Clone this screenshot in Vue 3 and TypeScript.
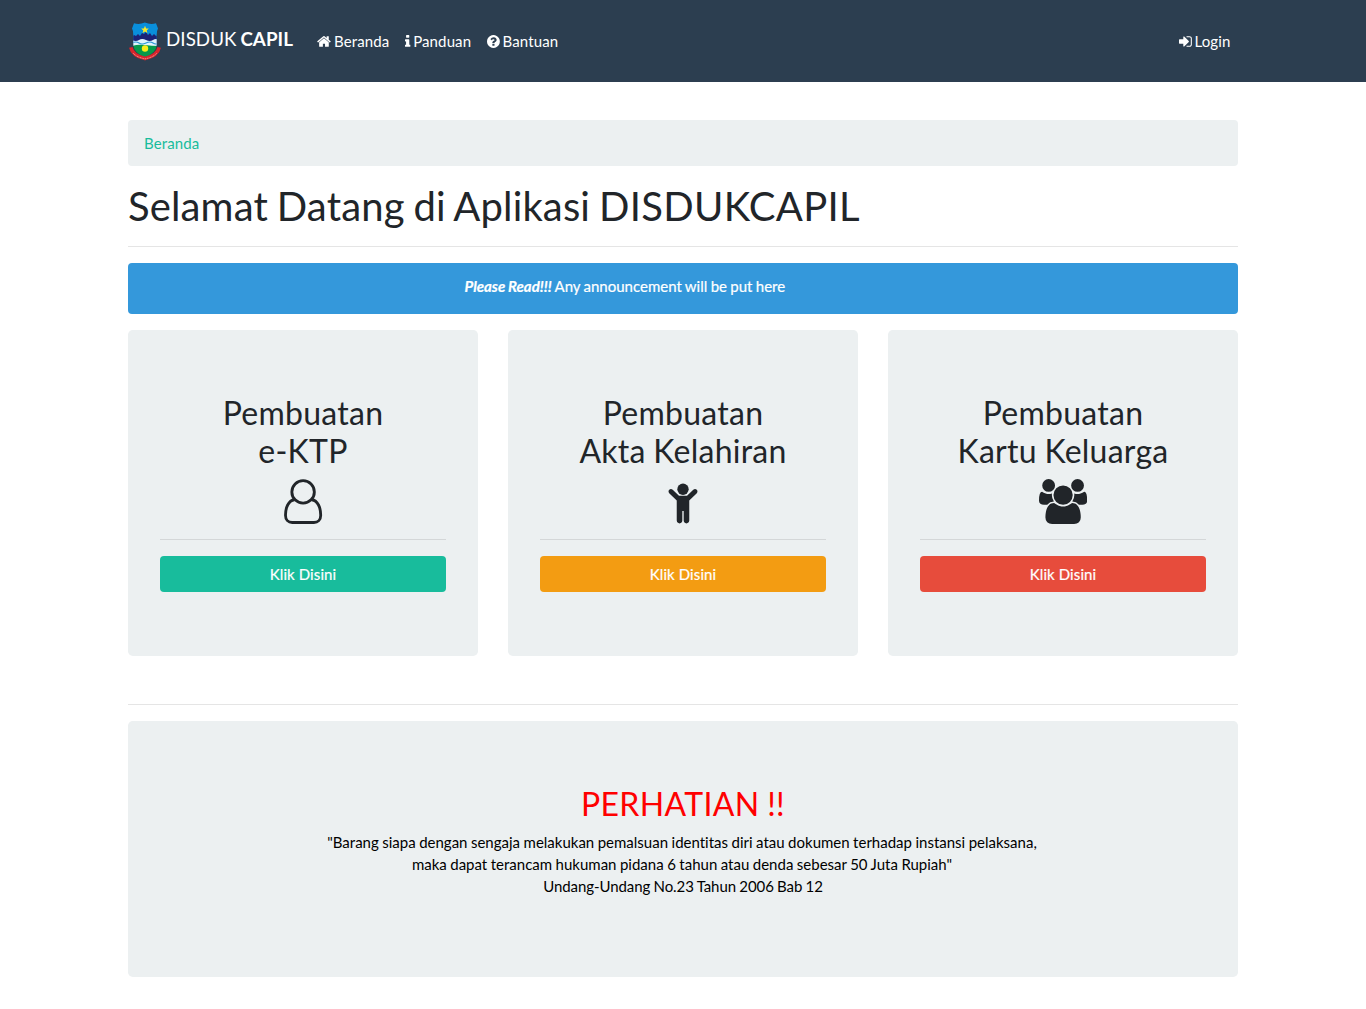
<script setup lang="ts">
interface Service {
  title: string
  subtitle: string
  icon: 'user' | 'child' | 'group'
  tone: string
}

const services: Service[] = [
  { title: 'Pembuatan', subtitle: 'e-KTP', icon: 'user', tone: 'success' },
  { title: 'Pembuatan', subtitle: 'Akta Kelahiran', icon: 'child', tone: 'warning' },
  { title: 'Pembuatan', subtitle: 'Kartu Keluarga', icon: 'group', tone: 'danger' },
]
</script>

<template>
  <header class="navbar">
    <div class="container nav-inner">
      <a class="brand">
        <svg class="logo" width="34" height="40" viewBox="0 0 34 40">
          <defs>
            <clipPath id="shield"><path d="M6 2.200Q11 4 16.800 1.600Q23 4 28 2.200L30 7.500Q28.500 10 28.700 14V24Q28 32 17 36.500Q6 32 5.300 24V14Q5.500 10 4 7.500Z" /></clipPath>
          </defs>
          <g clip-path="url(#shield)">
            <path fill="#098fdc" d="M0 0h34v20H0z" />
            <path fill="#1b2378" d="M4 16l2-2 2 1 2-2 2 2 2-3 2 1 2-2 2 3 2-2 2 3 2-2 2 2 3-1v8H4z" />
            <path fill="#dff3fb" d="M4 19q4 2 7 0t7 0 7 0 6 0v6H4z" />
            <path fill="none" stroke="#2796d4" stroke-width="1.200" d="M4 22q4-2 7 0t7 0 7 0 6 0" />
            <path fill="#07994a" d="M4 25q6-2 13-1t13 1v13H4z" />
          </g>
          <path fill="#f8e829" d="M17 4.800l1.100 2.600 2.700.2-2.100 1.800.7 2.700-2.400-1.500-2.400 1.500.7-2.700-2.100-1.800 2.700-.2z" />
          <circle cx="17" cy="27.500" r="3.200" fill="#f9ed18" />
          <path fill="none" stroke="#d9252b" stroke-width="3.600" d="M2.800 26.300q1.700 8.200 14.200 11.300Q29.500 34.500 31.200 26.300" />
          <path fill="none" stroke="#f3b7b2" stroke-width=".9" stroke-dasharray="1 .7" d="M5 32q4 4.500 12 5.800Q25 36.500 29 32" />
        </svg>
        <span class="brand-text">DISDUK <b>CAPIL</b></span>
      </a>
      <nav class="links">
        <a><svg width="13.930" height="15" viewBox="64 0 1664 1792"><path d="M1472 992v480q0 26-19 45t-45 19h-384v-384h-256v384h-384q-26 0-45-19t-19-45v-480q0-1 .5-3t.5-3l575-474 575 474q1 2 1 6zm223-69l-62 74q-8 9-21 11h-3q-13 0-21-7l-692-577-692 577q-12 8-24 7-13-2-21-11l-62-74q-8-10-7-23.5t11-21.5l719-599q32-26 76-26t76 26l244 204v-195q0-14 9-23t23-9h192q14 0 23 9t9 23v408l219 182q10 8 11 21.5t-7 23.5z" /></svg><span>Beranda</span></a>
        <a><svg width="5.360" height="15" viewBox="576 0 640 1792"><path d="M1216 1344v128q0 26-19 45t-45 19h-512q-26 0-45-19t-19-45v-128q0-26 19-45t45-19h64v-384h-64q-26 0-45-19t-19-45v-128q0-26 19-45t45-19h384q26 0 45 19t19 45v576h64q26 0 45 19t19 45zm-128-1152v192q0 26-19 45t-45 19h-256q-26 0-45-19t-19-45v-192q0-26 19-45t45-19h256q26 0 45 19t19 45z" /></svg><span>Panduan</span></a>
        <a><svg width="12.860" height="15" viewBox="128 0 1536 1792"><path d="M1024 1376v-192q0-14-9-23t-23-9h-192q-14 0-23 9t-9 23v192q0 14 9 23t23 9h192q14 0 23-9t9-23zm256-672q0-88-55.5-163t-138.5-116-170-41q-243 0-371 213-15 24 8 42l132 100q7 6 19 6 16 0 25-12 53-68 86-92 34-24 86-24 48 0 85.5 26t37.5 59q0 38-20 61t-68 45q-63 28-115.5 86.5t-52.5 125.5v36q0 14 9 23t23 9h192q14 0 23-9t9-23q0-19 21.5-49.5t54.5-49.5q32-18 49-28.5t46-35 44.5-48 28-60.5 12.5-81zm384 192q0 209-103 385.5t-279.5 279.5-385.5 103-385.5-103-279.5-279.5-103-385.5 103-385.5 279.5-279.5 385.5-103 385.5 103 279.5 279.5 103 385.5z" /></svg><span>Bantuan</span></a>
      </nav>
      <nav class="links right">
        <a><svg width="12.860" height="15" viewBox="128 0 1536 1792"><path d="M1312 896q0 26-19 45l-544 544q-19 19-45 19t-45-19-19-45v-288h-448q-26 0-45-19t-19-45v-384q0-26 19-45t45-19h448v-288q0-26 19-45t45-19 45 19l544 544q19 19 19 45zm352-352v704q0 119-84.5 203.5t-203.5 84.5h-320q-13 0-22.5-9.5t-9.5-22.5q0-4-1-20t-.5-26.5 3-23.5 10-19.5 20.5-6.5h320q66 0 113-47t47-113v-704q0-66-47-113t-113-47h-312l-11.500-1-11.500-3-8-5.500-7-9-2-13.500q0-4-1-20t-.5-26.500 3-23.500 10-19.500 20.500-6.500h320q119 0 203.500 84.500t84.500 203.500z" /></svg><span>Login</span></a>
      </nav>
    </div>
  </header>

  <main class="container">
    <div class="breadcrumb"><a>Beranda</a></div>
    <h1>Selamat Datang di Aplikasi <span class="name">DISDUKCAPIL</span></h1>
    <hr>
    <div class="alert"><span><b><i>Please Read!!!</i></b> Any announcement will be put here</span></div>
    <section class="services">
      <article v-for="s in services" :key="s.subtitle" class="panel">
        <h2>{{ s.title }}<br>{{ s.subtitle }}</h2>
        <svg v-if="s.icon === 'user'" class="icon" width="66" height="46" viewBox="0 12.500 66 46">
          <g fill="none" stroke="#212529" stroke-width="2.900">
            <circle cx="33.100" cy="25.700" r="11.500" />
            <path d="M24.200 33.700C18 34.500 15.100 42 15.100 49.500C15.100 54 18 57 22 57H44.200C48.200 57 51.100 54 51.100 49.500C51.100 42 48.200 34.500 42 33.700" />
          </g>
        </svg>
        <svg v-else-if="s.icon === 'child'" class="icon" width="66" height="46" viewBox="0 12.500 66 46">
          <circle cx="33" cy="23" r="5.800" />
          <path d="M18.900 23.500Q20.700 21.900 22.500 23.500L28.900 29.600H37.100L43.500 23.500Q45.300 21.900 47.100 23.500Q48.500 25.200 47.100 27L39.400 34.600V55Q39.100 57.800 36.500 57.900Q33.900 57.800 33.700 55V45.300H32.300V55Q32.100 57.800 29.500 57.900Q26.900 57.800 26.600 55V34.600L18.900 27Q17.500 25.200 18.900 23.500Z" />
        </svg>
        <svg v-else class="icon" width="48.200" height="45" viewBox="0 0 1920 1792">
          <path d="M593 896q-162 5-265 128h-134q-82 0-138-40.5t-56-118.5q0-353 124-353 6 0 43.5 21t97.5 42.5 119 21.5q67 0 133-23-5 37-5 66 0 139 81 256zm1071 637q0 120-73 189.5t-194 69.5h-874q-121 0-194-69.5t-73-189.5q0-53 3.5-103.5t14-109 26.5-108.5 43-97.5 62-81 85.5-53.5 111.5-20q10 0 43 21.5t73 48 107 48 135 21.5 135-21.5 107-48 73-48 43-21.5q61 0 111.5 20t85.5 53.5 62 81 43 97.5 26.5 108.5 14 109 3.5 103.500zm-1024-1277q0 106-75 181t-181 75-181-75-75-181 75-181 181-75 181 75 75 181zm704 384q0 159-112.500 271.500t-271.500 112.500-271.500-112.500-112.500-271.500 112.500-271.500 271.500-112.500 271.500 112.500 112.500 271.500zm576 225q0 78-56 118.500t-138 40.500h-134q-103-123-265-128 81-117 81-256 0-29-5-66 66 23 133 23 59 0 119-21.500t97.500-42.500 43.500-21q124 0 124 353zm-128-609q0 106-75 181t-181 75-181-75-75-181 75-181 181-75 181 75 75 181z" />
        </svg>
        <hr>
        <button type="button" class="btn" :class="s.tone">Klik Disini</button>
      </article>
    </section>
    <hr>
    <section class="panel notice">
      <h2>PERHATIAN !!</h2>
      <p class="quote">"Barang siapa dengan sengaja melakukan pemalsuan identitas diri atau dokumen terhadap instansi pelaksana,<br>maka dapat terancam hukuman pidana 6 tahun atau denda sebesar 50 Juta Rupiah"</p>
      <p class="law">Undang-Undang No.23 Tahun 2006 Bab 12</p>
    </section>
  </main>
</template>

<style>
body {
  margin: 0;
  background: #fff;
}
#app {
  font: 15px/1.5 Lato, "Liberation Sans", sans-serif;
  font-variant-ligatures: none;
  color: #212529;
}
</style>

<style scoped>
* { box-sizing: border-box; }
.container { width: 1110px; margin: 0 auto; }
.navbar { height: 82px; background: #2c3e50; }
.nav-inner { height: 100%; display: flex; align-items: center; }
.brand { display: flex; align-items: center; width: 181px; color: #fff; }
.logo { flex: none; margin-right: 4px; }
.brand-text { font-size: 18.750px; line-height: 28px; white-space: nowrap; margin-top: -4px; letter-spacing: .06px; word-spacing: -1px; }
.links { display: flex; gap: 15.500px; padding-left: 8px; color: #fff; letter-spacing: .12px; }
.links.right { margin-left: auto; padding-right: 7.500px; }
.links a { display: flex; align-items: center; gap: 3px; }
.links svg { fill: currentColor; overflow: visible; }
.breadcrumb { margin-top: 38px; height: 46px; padding: 12px 16px; border-radius: 4px; background: #ecf0f1; color: #18bc9c; letter-spacing: .12px; }
h1, h2 { font-weight: 400; line-height: 1.2; margin: 0; }
h1 { font-size: 40px; margin-top: 16px; letter-spacing: .15px; word-spacing: -1.500px; }
.name { letter-spacing: .3px; }
h2 { font-size: 32px; letter-spacing: .25px; word-spacing: -.8px; }
hr { height: 1px; margin: 16px 0; border: 0; background: rgba(0, 0, 0, .1); }
.alert { height: 51px; padding: 12px 0 0 336.500px; border-radius: 4px; background: #3498db; color: #fff; word-spacing: -.5px; -webkit-text-stroke: .2px #fff; }
.services { display: grid; grid-template-columns: repeat(3, 1fr); gap: 30px; margin: 16px 0 48px; }
.panel { height: 326px; padding: 64px 32px; border-radius: 4.800px; background: #ecf0f1; text-align: center; }
.panel h2 { height: 77px; }
.icon { display: block; height: 45px; margin: 7.500px auto -.5px; fill: #212529; }
.btn { display: block; width: 100%; height: 36px; padding: 0; border: 0; border-radius: 4px; font: inherit; letter-spacing: .1px; color: #fff; -webkit-text-stroke: .2px #fff; }
.success { background: #18bc9c; }
.warning { background: #f39c12; }
.danger { background: #e74c3c; }
.notice { height: 256px; color: #000; }
.notice h2 { height: 38px; color: #f00; letter-spacing: .33px; }
.notice p { margin: 0; line-height: 22px; }
.notice .quote { margin-top: 8px; padding-right: 2px; word-spacing: -.35px; }
.notice .law { letter-spacing: -.07px; word-spacing: -.5px; }
</style>
